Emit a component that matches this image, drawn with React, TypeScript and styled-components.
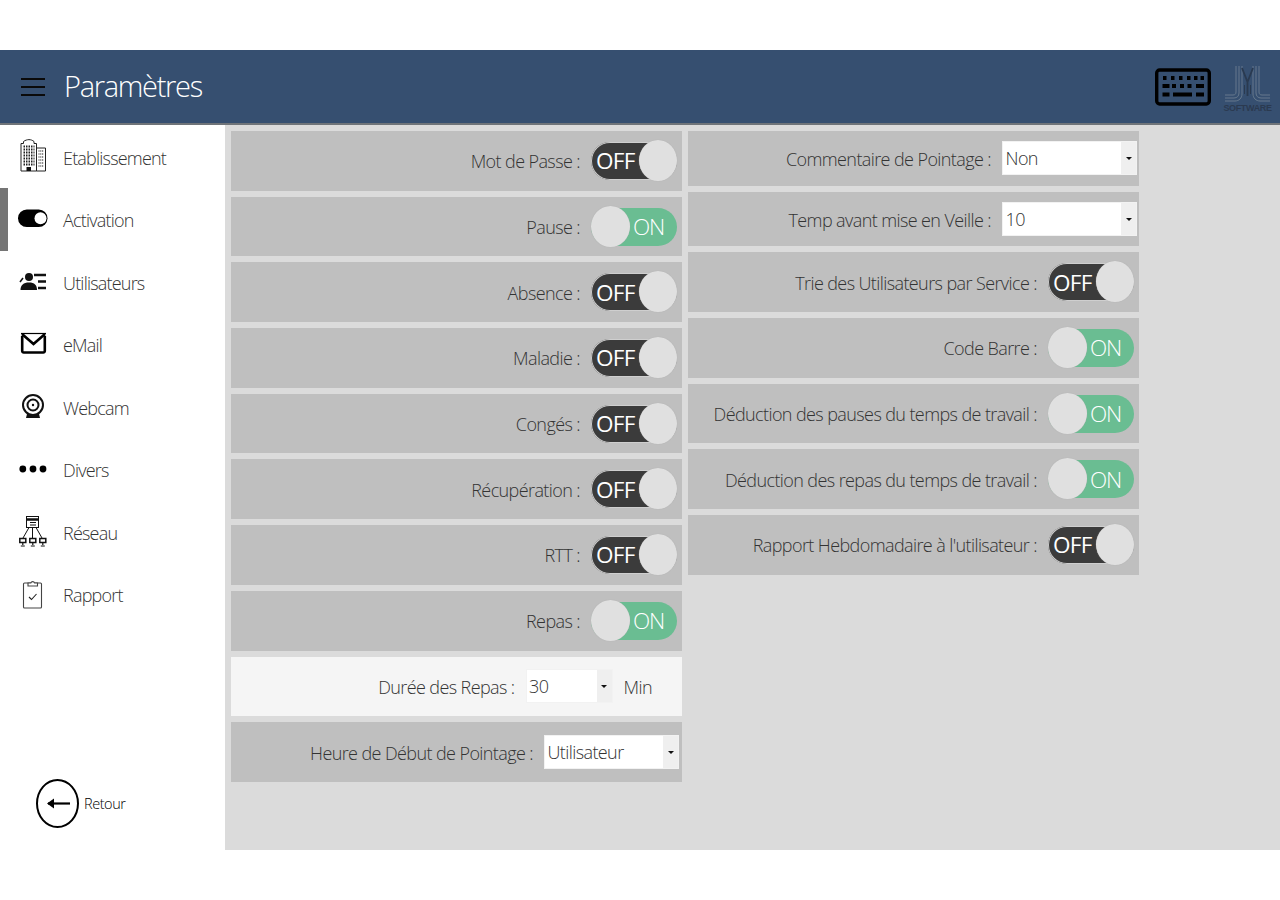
import React from "react";
import styled, { createGlobalStyle } from "styled-components";

const Global = createGlobalStyle`
  html, body { margin: 0; padding: 0; background: #fff; }
  body { font-family: "Open Sans", "Noto Sans", sans-serif; font-weight: 300; color: #2a2a2a; }
`;

const Page = styled.div`
  width: 1280px;
  height: 900px;
  padding: 50px 0;
  box-sizing: border-box;
  display: flex;
  flex-direction: column;
  overflow: hidden;
`;

const Header = styled.header`
  height: 75px;
  flex: none;
  box-sizing: border-box;
  background: #364f70;
  border-bottom: 2px solid #6f7479;
  display: flex;
  align-items: center;
  padding: 0 9px 0 21px;
`;

const Burger = styled.div`
  width: 24px;
  height: 18px;
  display: flex;
  flex-direction: column;
  justify-content: space-between;
  margin-right: 19px;
  span { display: block; height: 2px; background: #0a0a0a; }
`;

const Title = styled.h1`
  margin: 0 0 2px;
  font-size: 29px;
  font-weight: 300;
  color: #fff;
  letter-spacing: -1.3px;
  flex: 1;
`;

const Main = styled.div`
  flex: 1;
  display: flex;
  min-height: 0;
`;

const Sidebar = styled.nav`
  width: 225px;
  flex: none;
  background: #fff;
  display: flex;
  flex-direction: column;
  padding-top: 0.5px;
  box-sizing: border-box;
`;

const NavItem = styled.div<{ $active?: boolean }>`
  height: 62.5px;
  display: flex;
  align-items: center;
  box-sizing: border-box;
  padding-left: 19px;
  gap: 16px;
  font-size: 18px;
  letter-spacing: -0.8px;
  color: #333;
  box-shadow: ${(p) => (p.$active ? "inset 8px 0 0 #757575" : "none")};
`;

const NavLabel = styled.span`
  padding-top: 2px;
`;

const NavIcon = styled.svg`
  width: 28px;
  height: 34px;
  flex: none;
  overflow: visible;
`;

const Back = styled.div`
  margin-top: auto;
  margin-bottom: 22px;
  margin-left: 36px;
  display: flex;
  align-items: center;
  gap: 5px;
  font-size: 14.5px;
  letter-spacing: -0.45px;
  color: #000;
`;

const Content = styled.main`
  flex: 1;
  background: #dbdbdb;
  padding: 6px;
  display: flex;
  gap: 6px;
  align-items: flex-start;
`;

const Column = styled.div`
  width: 451px;
  display: flex;
  flex-direction: column;
  gap: 6px;
`;

const Row = styled.div<{ $h?: number; $light?: boolean; $pr?: number }>`
  height: ${(p) => p.$h ?? 59.7}px;
  background: ${(p) => (p.$light ? "#f5f5f5" : "#bfbfbf")};
  display: flex;
  align-items: center;
  justify-content: flex-end;
  padding-right: ${(p) => p.$pr ?? 5}px;
  box-sizing: border-box;
`;

const Label = styled.span`
  font-size: 18px;
  letter-spacing: -0.6px;
  color: #333;
  margin-right: 11px;
  padding-top: 1px;
  white-space: nowrap;
`;

const Track = styled.div<{ $on: boolean }>`
  position: relative;
  width: 86px;
  height: 38px;
  border-radius: 19px;
  background: ${(p) => (p.$on ? "#6abd92" : "#3b3b3b")};
  box-shadow: ${(p) => (p.$on ? "none" : "inset 0 0 0 1px #cfcfcf")};
  color: #fff;
  font-size: 22.5px;
  font-weight: ${(p) => (p.$on ? 300 : 400)};
  letter-spacing: ${(p) => (p.$on ? "-1.2px" : "-0.7px")};
  display: flex;
  align-items: center;
  justify-content: ${(p) => (p.$on ? "flex-end" : "flex-start")};
  padding: 0 ${(p) => (p.$on ? "13px" : "5px")};
  box-sizing: border-box;
`;

const Knob = styled.div<{ $on: boolean }>`
  position: absolute;
  top: -2px;
  ${(p) => (p.$on ? "left: 0;" : "right: 0;")}
  width: ${(p) => (p.$on ? 39 : 38)}px;
  height: 41px;
  border-radius: 50%;
  background: #e0e0e0;
  box-shadow: 0 0 1px #a8a8a8;
`;

const SelectBox = styled.div<{ $w: number }>`
  width: ${(p) => p.$w}px;
  height: 34px;
  background: #fff;
  display: flex;
  align-items: center;
  justify-content: space-between;
  box-sizing: border-box;
  border: 1px solid #f2f2f2;
  font-size: 18px;
  letter-spacing: -0.6px;
  color: #333;
  padding-left: 2.5px;
`;

const SelectArrow = styled.div`
  width: 15px;
  height: 32px;
  background: #efefef;
  display: flex;
  align-items: center;
  justify-content: center;
  &::after {
    content: "";
    border-left: 3px solid transparent;
    border-right: 3px solid transparent;
    border-top: 3px solid #111;
  }
`;

const Unit = styled.span`
  font-size: 18px;
  letter-spacing: -0.6px;
  color: #333;
  margin-left: 11px;
  padding-top: 1px;
`;

const LogoWrap = styled.div`
  width: 47px;
  margin-left: 13px;
  display: flex;
  flex-direction: column;
  align-items: center;
  margin-top: 4px;
`;

const LogoText = styled.span`
  font-family: "Liberation Sans", sans-serif;
  font-size: 9px;
  font-weight: 700;
  line-height: 8px;
  letter-spacing: -0.35px;
  color: #2b3a50;
  white-space: nowrap;
`;

const Toggle = ({ on }: { on: boolean }) => (
  <Track $on={on}>
    {on ? "ON" : "OFF"}
    <Knob $on={on} />
  </Track>
);

const Select = ({ value, w }: { value: string; w: number }) => (
  <SelectBox $w={w}>
    {value}
    <SelectArrow />
  </SelectBox>
);

const S = { fill: "none", stroke: "#111", strokeWidth: 1 };

const icons: Record<string, React.ReactNode> = {
  building: (
    <>
      <path d="M2 31V3.500h2.500V1.500C8 -1 12 -1 15 1.500v2H17.500V31z" fill="#fff" stroke="#222" strokeWidth="1" />
      <path d="M17.500 31V8h9v23z" fill="#fff" stroke="#222" strokeWidth="1" />
      <path d="M4.500 6.500h11M4.500 9.500h11M4.500 12.500h11M4.500 15.500h11M4.500 18.500h11M4.500 21.500h11M4.500 24.500h11" stroke="#222" strokeWidth="2" strokeDasharray="1.500 1" />
      <path d="M19.500 11h5.500M19.500 14h5.500M19.500 17h5.500M19.500 20h5.500M19.500 23h5.500M19.500 26h5.500" stroke="#555" strokeWidth="1.600" strokeDasharray="1 .8" />
      <rect x="7.500" y="27" width="4.500" height="4" fill="#111" />
    </>
  ),
  toggle: (
    <>
      <rect x="-1" y="7.500" width="29.500" height="17.500" rx="8.750" fill="#000" />
      <circle cx="21.500" cy="16.250" r="6" fill="#fff" />
    </>
  ),
  users: (
    <>
      <circle cx="10" cy="12" r="4" fill="#111" />
      <path d="M1.500 25c0-5 3-7.500 8.500-7.500s8 2.500 8 7.500z" fill="#111" />
      <path d="M1 17l3-4" stroke="#111" strokeWidth="1.500" />
      <path d="M15 10h12M19 16.500h8M19 23h8" stroke="#111" strokeWidth="2.400" />
    </>
  ),
  mail: (
    <>
      <path d="M3.200 9v15a1.500 1.500 0 0 0 1.500 1.500h19.600a1.500 1.500 0 0 0 1.500-1.500V9" fill="none" stroke="#000" strokeWidth="2.600" />
      <path d="M2 6.500h25" stroke="#000" strokeWidth="1.200" />
      <path d="M3 7l11.500 10L26 7" fill="none" stroke="#000" strokeWidth="2.600" />
    </>
  ),
  cam: (
    <>
      <circle cx="14" cy="15" r="10" fill="none" stroke="#111" strokeWidth="2" />
      <circle cx="14" cy="15" r="5.500" fill="none" stroke="#111" strokeWidth="2" />
      <circle cx="14" cy="15" r="1.200" fill="#111" />
      <path d="M8 24l-1 4h14l-1-4z" fill="#111" />
    </>
  ),
  dots: (
    <>
      <circle cx="3.800" cy="17" r="3.400" fill="#000" />
      <circle cx="14" cy="17" r="3.400" fill="#000" />
      <circle cx="24" cy="17" r="3.400" fill="#000" />
    </>
  ),
  net: (
    <>
      <rect x="7.500" y="1.500" width="12" height="11" {...S} />
      <path d="M7.500 4.500h12" stroke="#111" strokeWidth="2.500" />
      <path d="M11 7.500h6M11 10h6" stroke="#111" strokeWidth="1" />
      <path d="M10 12.500L4 23M13.500 12.500V23M17 12.500L23 23" {...S} />
      <path d="M.8 23.500h6v4h-6zM10.800 23.500h6v4h-6zM20.800 23.500h6v4h-6z" fill="#fff" stroke="#111" strokeWidth="1.500" />
      <path d="M3.800 27.500v2.500M13.800 27.500v2.500M23.800 27.500v2.500M1.800 31h4M11.800 31h4M21.800 31h4" stroke="#111" strokeWidth="1.200" />
    </>
  ),
  report: (
    <>
      <rect x="4.500" y="6" width="18" height="25" rx="1" fill="none" stroke="#444" strokeWidth="1.100" />
      <path d="M9 9V6h2.800a2 2 0 0 1 3.800 0H18.500v3z" fill="#fff" stroke="#444" strokeWidth="1.100" />
      <path d="M10 20l2.500 2.500 5-5.500" fill="none" stroke="#222" strokeWidth="1.100" />
    </>
  ),
};

const nav = [
  ["building", "Etablissement"],
  ["toggle", "Activation"],
  ["users", "Utilisateurs"],
  ["mail", "eMail"],
  ["cam", "Webcam"],
  ["dots", "Divers"],
  ["net", "Réseau"],
  ["report", "Rapport"],
];

const left: [string, boolean][] = [
  ["Mot de Passe :", false],
  ["Pause :", true],
  ["Absence :", false],
  ["Maladie :", false],
  ["Congés :", false],
  ["Récupération :", false],
  ["RTT :", false],
  ["Repas :", true],
];

const right: [string, boolean][] = [
  ["Trie des Utilisateurs par Service :", false],
  ["Code Barre :", true],
  ["Déduction des pauses du temps de travail :", true],
  ["Déduction des repas du temps de travail :", true],
  ["Rapport Hebdomadaire à l'utilisateur :", false],
];

const Keyboard = () => (
  <svg width="56" height="38" viewBox="0 0 56 38">
    <rect x="1.700" y="2" width="52.600" height="34" rx="3" fill="none" stroke="#000" strokeWidth="3.400" />
    <path d="M8 8h3.500v4H8zM16 8h3.500v4H16zM24 8h3.500v4H24zM32 8h3.500v4H32zM39 8h3.500v4H39zM45.500 8h3.500v4h-3.500zM7.500 16h7v4h-7zM17 16h4v4h-4zM25 16h4v4h-4zM32.500 16h4v4h-4zM41 16h8v4h-8zM7.500 24.500h7v4h-7zM18 24.500h19v4H18zM41 24.500h8v4h-8z" fill="#000" />
  </svg>
);

const Logo = () => (
  <LogoWrap>
    <svg width="47" height="39" viewBox="0 0 47 39" fill="none" stroke="#66798d" strokeWidth="1">
      <path d="M12 1v26c0 2-1 3-3 3H1" />
      <path d="M15 1v27c0 3-2 5-5 5H1" />
      <path d="M18 1v28c0 4-3 7-7 7H1" />
      <path d="M29 1v28c0 4 3 7 7 7h10" />
      <path d="M32 1v27c0 3 2 5 5 5h9" />
      <path d="M35 1v26c0 2 1 3 3 3h8" />
      <path d="M18 3l5.500 14 5.500-14M23.500 17v14" stroke="#2a3a50" strokeWidth="1.800" />
      <path d="M20.500 20v9M26.500 20v9" stroke="#2a3a50" strokeWidth="1" />
    </svg>
    <LogoText>SOFTWARE</LogoText>
  </LogoWrap>
);

export default function App() {
  return (
    <Page>
      <Global />
      <Header>
        <Burger>
          <span />
          <span />
          <span />
        </Burger>
        <Title>Paramètres</Title>
        <Keyboard />
        <Logo />
      </Header>
      <Main>
        <Sidebar>
          {nav.map(([icon, label], i) => (
            <NavItem key={label} $active={i === 1}>
              <NavIcon viewBox="0 0 28 34">{icons[icon]}</NavIcon>
              <NavLabel>{label}</NavLabel>
            </NavItem>
          ))}
          <Back>
            <svg width="43" height="49" viewBox="0 0 43 49" fill="none">
              <ellipse cx="21.500" cy="24.500" rx="20.500" ry="23.500" stroke="#000" strokeWidth="2" />
              <path d="M12 24.500h22" stroke="#000" strokeWidth="2.200" />
              <path d="M11 24.500l7-5v10z" fill="#000" />
            </svg>
            Retour
          </Back>
        </Sidebar>
        <Content>
          <Column>
            {left.map(([label, on]) => (
              <Row key={label}>
                <Label>{label}</Label>
                <Toggle on={on} />
              </Row>
            ))}
            <Row $light $pr={30}>
              <Label>Durée des Repas :</Label>
              <Select value="30" w={87} />
              <Unit>Min</Unit>
            </Row>
            <Row $pr={3}>
              <Label>Heure de Début de Pointage :</Label>
              <Select value="Utilisateur" w={135} />
            </Row>
          </Column>
          <Column>
            <Row $h={54.7} $pr={2}>
              <Label>Commentaire de Pointage :</Label>
              <Select value="Non" w={135} />
            </Row>
            <Row $h={54.7} $pr={2}>
              <Label>Temp avant mise en Veille :</Label>
              <Select value="10" w={135} />
            </Row>
            {right.map(([label, on]) => (
              <Row key={label}>
                <Label>{label}</Label>
                <Toggle on={on} />
              </Row>
            ))}
          </Column>
        </Content>
      </Main>
    </Page>
  );
}
